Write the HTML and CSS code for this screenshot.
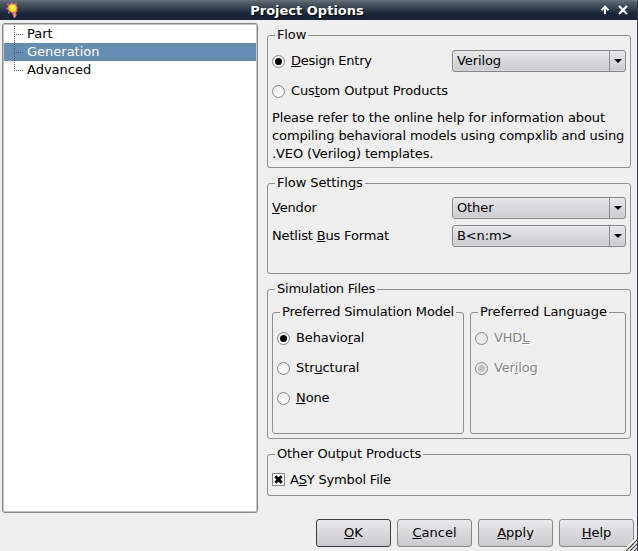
FILE: index.html
```html
<!DOCTYPE html>
<html lang="en">
<head>
<meta charset="utf-8">
<title>Project Options</title>
<link rel="stylesheet" href="styles.css">
</head>
<body>
<div class="window">
  <header class="titlebar">
    <svg class="bulb" width="14" height="17" viewBox="0 0 14 17">
      <path d="M1 2.500h2M5 1h1M9 1.500h2M0 6.500h2M10 6h2M2 10.500h2M10.500 9h1" stroke="#b8609a" stroke-width="2"/>
      <path d="M2.500 4L4.500 2h4l2 2v4.500L9 11H6.500L2.500 8z" fill="#ffd321" stroke="#e8866c"/>
      <path d="M5 3.500h3.500V8H5z" fill="#fff95c"/>
      <path d="M6.500 10.500l3.500.5v3L8.500 16l-1-2z" fill="#f2a46a" stroke="#c85a8e"/>
    </svg>
    <h1>Project Options</h1>
    <div class="controls">
      <svg width="10" height="10" viewBox="0 0 10 10"><path d="M5 9V2M1.500 5.200L5 1.700l3.500 3.500" fill="none" stroke="#fff" stroke-width="2"/></svg>
      <svg width="10" height="10" viewBox="0 0 10 10"><path d="M1 1l8 8M9 1L1 9" stroke="#fff" stroke-width="2.200"/></svg>
    </div>
  </header>
  <main class="content">
    <ul class="tree">
      <li>Part</li>
      <li class="selected">Generation</li>
      <li class="last">Advanced</li>
    </ul>
    <div class="panel">
      <fieldset class="flow">
        <legend>Flow</legend>
        <div class="row">
          <label class="radio on tight"><i></i><span><u>D</u>esign Entry</span></label>
          <div class="combo"><span>Verilog</span><b></b></div>
        </div>
        <label class="radio custom"><i></i><span>Cus<u>t</u>om Output Products</span></label>
        <p>Please refer to the online help for information about<br>compiling behavioral models using compxlib and using<br>.VEO (Verilog) templates.</p>
      </fieldset>
      <fieldset class="settings">
        <legend>Flow Settings</legend>
        <div class="row"><span class="name"><u>V</u>endor</span><div class="combo"><span>Other</span><b></b></div></div>
        <div class="row"><span class="name">Netlist <u>B</u>us Format</span><div class="combo"><span>B&lt;n:m&gt;</span><b></b></div></div>
      </fieldset>
      <fieldset class="simulation">
        <legend class="tight">Simulation Files</legend>
        <fieldset class="model">
          <legend>Preferred Simulation Model</legend>
          <label class="radio on"><i></i><span>Behavio<u>r</u>al</span></label>
          <label class="radio"><i></i><span>Str<u>u</u>ctural</span></label>
          <label class="radio"><i></i><span><u>N</u>one</span></label>
        </fieldset>
        <fieldset class="language">
          <legend>Preferred Language</legend>
          <label class="radio disabled"><i></i><span>VHD<u>L</u></span></label>
          <label class="radio on disabled"><i></i><span>Ver<u>i</u>log</span></label>
        </fieldset>
      </fieldset>
      <fieldset class="other">
        <legend>Other Output Products</legend>
        <label class="check"><svg width="13" height="13" viewBox="0 0 13 13"><rect x=".5" y=".5" width="12" height="12" fill="#fff" stroke="#858585"/><path d="M3.300 3.300l6.400 6.400M9.700 3.300L3.300 9.700" stroke="#000" stroke-width="3"/></svg><span>A<u>S</u>Y Symbol File</span></label>
      </fieldset>
    </div>
  </main>
  <footer class="buttons">
    <button class="default"><u>O</u>K</button>
    <button><u>C</u>ancel</button>
    <button><u>A</u>pply</button>
    <button><u>H</u>elp</button>
  </footer>
  <svg class="grip" width="13" height="13" viewBox="0 0 13 13"><path d="M0 12L12 0M4 13L13 4M8 13L13 8" stroke="#fff" stroke-width="2"/><path d="M1 13L13 1M5 13L13 5M9 13L13 9" stroke="#444" stroke-width="1.200"/></svg>
</div>
</body>
</html>
```

FILE: styles.css
```css
* { box-sizing: border-box; }
body {
  margin: 0;
  font: 13px/17px "DejaVu Sans", sans-serif;
  color: #000;
  background: #efefef;
  white-space: nowrap;
}
.window {
  position: relative;
  width: 638px;
  height: 551px;
  overflow: hidden;
  background: #efefef;
  border-right: 1px solid #353c45;
}
.titlebar {
  display: grid;
  grid-template-columns: 60px 1fr 60px;
  align-items: center;
  height: 20px;
  margin-right: -1px;
  border-radius: 0 3px 0 0;
  background: linear-gradient(#66717c 0, #4a5561 4px, #2b3846 10px, #1a2637 14px, #182237 20px);
}
.bulb { margin-left: 6px; }
.titlebar h1 {
  margin: 0;
  padding: 2px 24px 0 0;
  font-size: 13px;
  line-height: 18px;
  text-align: center;
  color: #fff;
  text-shadow: 1px 1px 1px #000;
}
.controls { display: flex; gap: 8px; padding-left: 22px; }
.content { display: flex; gap: 9px; padding: 3px 6px 0 2px; height: 493px; }
.tree {
  width: 256px;
  height: 490px;
  margin: 0;
  padding: 1px 1px 0;
  list-style: none;
  background: #fff;
  border: 1px solid #898989;
  border-radius: 3px;
  box-shadow: inset 0 0 0 1px #c4c4c4;
}
.tree li {
  position: relative;
  height: 18px;
  line-height: 18px;
  padding-left: 23px;
}
.tree .selected { background: #678db2; color: #fff; }
.tree li::before {
  content: "";
  position: absolute;
  left: 10px;
  top: 0;
  width: 1px;
  height: 18px;
  background: repeating-linear-gradient(#fff0 0 1px, #555 1px 2px);
}
.tree .last::before { height: 10px; }
.tree li::after {
  content: "";
  position: absolute;
  left: 10px;
  top: 9px;
  width: 9px;
  height: 1px;
  background: repeating-linear-gradient(90deg, #555 0 1px, #fff0 1px 2px);
}
.panel {
  display: flex;
  flex-direction: column;
  gap: 7px;
  width: 364px;
  padding-top: 4px;
  letter-spacing: -.11px;
}
fieldset {
  margin: 0;
  padding: 6px 4px 0;
  border: 1px solid #8e8e8e;
  border-radius: 3px;
  min-width: 0;
}
legend { height: 17px; line-height: 15px; margin-left: 3px; padding: 0 2px; }
.tight { letter-spacing: -.24px; }
u { text-decoration: underline 1px; text-underline-offset: 1px; text-decoration-skip-ink: none; }
.flow { height: 141px; flex: none; }
.settings { height: 99px; flex: none; }
.simulation { height: 158px; flex: none; display: flex; gap: 6px; }
.other { height: 50px; flex: none; }
.row { display: flex; justify-content: space-between; align-items: center; height: 22px; }
.settings { padding-top: 5px; }
.settings .row { margin-bottom: 6px; }
.name { padding-bottom: 2px; letter-spacing: -.17px; }
.combo {
  display: flex;
  justify-content: space-between;
  width: 174px;
  height: 22px;
  padding-left: 4px;
  line-height: 19px;
  border: 1px solid #858587;
  border-radius: 3px;
  background: linear-gradient(#e6e6eb, #cbcbd0);
  box-shadow: inset 0 0 0 1px #ffffff40;
}
.combo b {
  width: 16px;
  border-left: 1px solid #8c8c8e;
  display: flex;
  align-items: center;
  justify-content: center;
}
.combo b::after {
  content: "";
  border: 4px solid transparent;
  border-top-color: #000;
  border-bottom: 0;
}
.radio { display: flex; align-items: center; gap: 6px; height: 17px; }
.radio span { padding-bottom: 2px; }
.radio i {
  display: grid;
  place-items: center;
  width: 13px;
  height: 13px;
  border: 1px solid #858585;
  border-radius: 50%;
  background: linear-gradient(#f0f0f0, #fff);
}
.radio.on i::after { content: ""; width: 7px; height: 7px; border-radius: 50%; background: #000; }
.custom { margin-top: 11px; }
.flow p { margin: 9px 0 0; line-height: 18px; }
.model, .language { height: 130px; padding-top: 9px; }
.model { width: 192px; }
.language { width: 156px; }
.model .radio, .language .radio { margin-bottom: 13px; }
.model legend { letter-spacing: -.16px; }
.language legend { letter-spacing: -.06px; }
.radio.disabled { color: #858585; text-shadow: 1px 1px #fff; letter-spacing: -.16px; }
.disabled i { background: #eaeaea; }
.disabled.on i::after { background: #c2c2c2; }
.check { display: flex; align-items: center; gap: 5px; height: 17px; margin-top: 2px; letter-spacing: -.18px; }
.buttons { display: flex; justify-content: flex-end; gap: 6px; padding: 6px 3px 0 0; }
button {
  width: 75px;
  height: 28px;
  padding: 0 0 2px;
  font: inherit;
  color: #000;
  border: 1px solid #87878a;
  border-radius: 3px;
  background: linear-gradient(#e8e8ed, #c9c9ce);
}
.default { border-color: #3c3c40; }
.grip { position: absolute; right: -1px; bottom: 0; }
```
